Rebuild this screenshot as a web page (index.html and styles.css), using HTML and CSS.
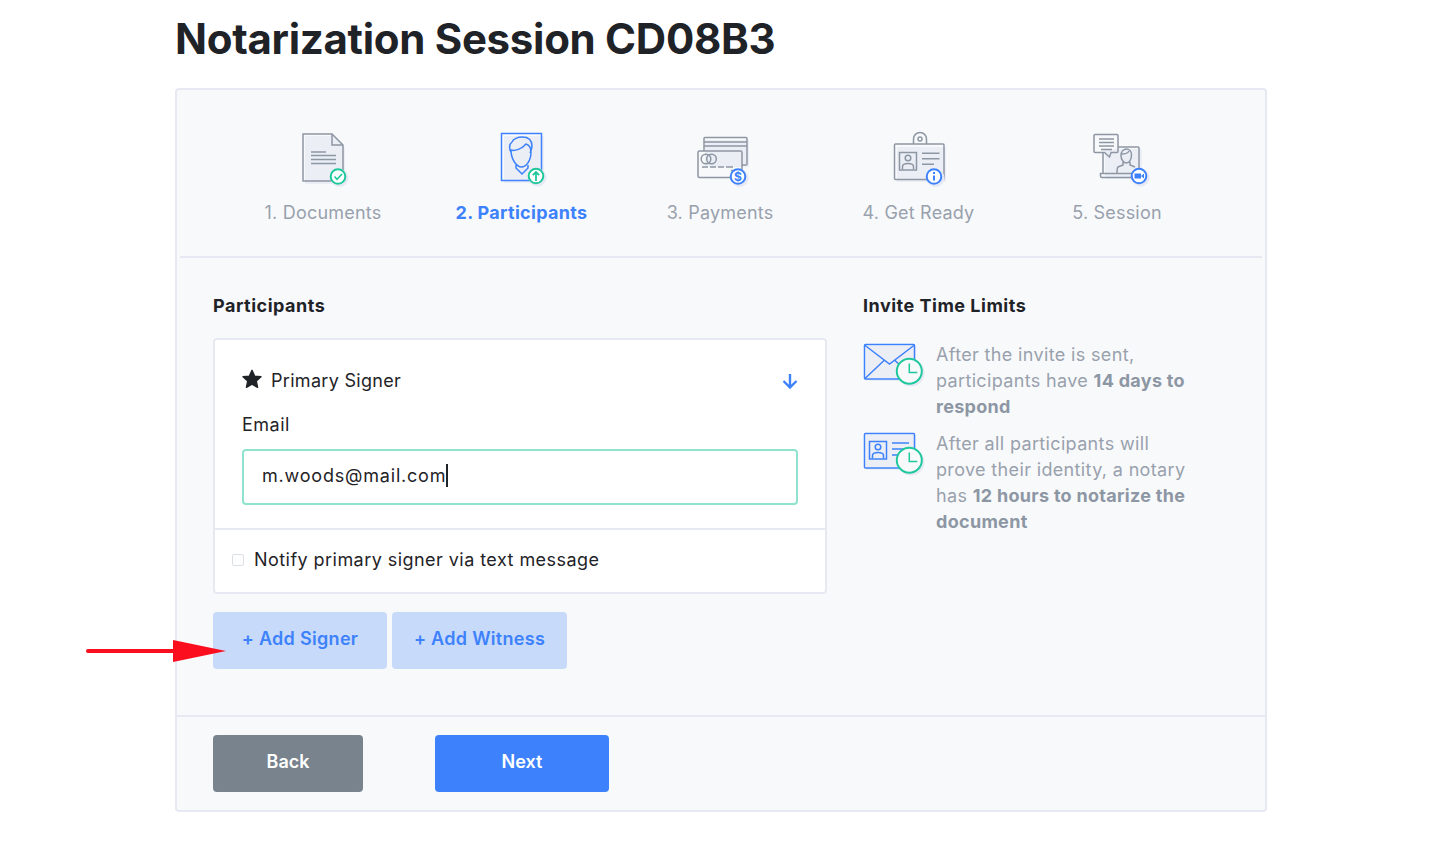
FILE: index.html
```html
<!DOCTYPE html>
<html lang="en">
<head>
  <meta charset="UTF-8">
  <meta name="viewport" content="width=device-width, initial-scale=1.0">
  <title>Notarization Session</title>
  <link rel="stylesheet" href="styles.css">
</head>
<body>
  <div class="page">
    <h1 class="title">Notarization Session CD08B3</h1>

    <div class="card">
      <div class="steps">
        <div class="step">
          <svg class="step-icon" viewBox="0 0 60 60">
            <path class="shade" d="M12 8h28l12 12v36H12z"/>
            <path class="line-gray" d="M10 6h29l11 11v36H10z" stroke-width="2"/>
            <path class="line-gray" d="M39 6v11h11M18 24h15M18 27.500h25M18 31.500h25M18 35.500h25" stroke-width="1.300"/>
            <circle class="badge-shade" cx="46.500" cy="50" r="9"/>
            <circle class="badge-white" cx="45" cy="48.500" r="7.300" stroke="#1fc79d"/>
            <path d="M41.500 48.500l2.500 2.800 5-5.300" fill="none" stroke="#1fc79d" stroke-width="1.600"/>
          </svg>
          <div class="step-label">1. Documents</div>
        </div>
        <div class="step active">
          <svg class="step-icon" viewBox="0 0 60 60">
            <path class="shade" d="M12 8h40v47H12z"/>
            <rect class="line-blue" x="9.500" y="5.500" width="40" height="47" stroke-width="2"/>
            <path class="line-blue" d="M19 24c-2-3-2-8 1-10 1-3 6-5 10-5 6 0 10 3 10 9 0 3-1 5-2 7M19 22c3 1 10 0 15-6 3 1 5 4 5 8 0 9-5 15-9.500 15S19 32 19 22zM24 37v3l6 6 6-6v-3"/>
            <circle class="badge-shade" cx="45.500" cy="49.500" r="9"/>
            <circle class="badge-white" cx="44" cy="48" r="7.300" stroke="#1fc79d"/>
            <path d="M44 53v-9M40.800 47.200L44 44l3.200 3.200" fill="none" stroke="#1fc79d" stroke-width="1.800"/>
          </svg>
          <div class="step-label">2. Participants</div>
        </div>
        <div class="step">
          <svg class="step-icon" viewBox="0 0 60 60">
            <path class="shade" d="M15 12h44v27H15z"/>
            <path class="line-gray" d="M14 23v-12.500a1 1 0 0 1 1-1h41a1 1 0 0 1 1 1v25.500a1 1 0 0 1-1 1h-4M14 14h43M14 18h43"/>
            <rect class="line-gray" x="8" y="23" width="44" height="26.500" rx="1.500" fill="#f8f9fb"/>
            <circle class="line-gray" cx="16" cy="31" r="4.800"/>
            <circle class="line-gray" cx="21.500" cy="31" r="4.800"/>
            <path class="line-gray" d="M12 39h6M20 39h6M28 39h6M36 39h7M41 42.500h5" stroke-width="1.300"/>
            <circle class="badge-shade" cx="49.500" cy="50" r="9"/>
            <circle class="badge-white" cx="48" cy="48.500" r="7.300" stroke="#3d82fc"/>
            <text class="badge-text" x="48" y="52.500">$</text>
          </svg>
          <div class="step-label">3. Payments</div>
        </div>
        <div class="step">
          <svg class="step-icon" viewBox="0 0 60 60">
            <path class="shade" d="M8 19h49v35H8z"/>
            <path class="line-gray" d="M24.500 16v-5a6.500 6.500 0 0 1 13 0v5"/>
            <circle class="line-gray" cx="31" cy="11" r="2"/>
            <rect class="line-gray" x="5.500" y="16" width="49.500" height="35.500" rx="1"/>
            <rect class="line-gray" x="10.500" y="24.500" width="17" height="17.500"/>
            <circle class="line-gray" cx="19" cy="30" r="2.800"/>
            <path class="line-gray" d="M13.500 41.500v-3c0-2 3-3 5.500-3s5.500 1 5.500 3v3M33 25.300h17.500M33 30.700h17.500M33 36.300h12"/>
            <circle class="badge-shade" cx="46.500" cy="50" r="9"/>
            <circle class="badge-white" cx="45" cy="48.500" r="7.300" stroke="#3d82fc"/>
            <path d="M45 47.500v5M45 44v2" fill="none" stroke="#3d82fc" stroke-width="2"/>
          </svg>
          <div class="step-label">4. Get Ready</div>
        </div>
        <div class="step">
          <svg class="step-icon" viewBox="0 0 60 60">
            <path class="shade" d="M18 21h37v30H18z"/>
            <path class="line-gray" d="M16 24v21M31 19h20a1 1 0 0 1 1 1v25M13.500 45.500h35v2.500a1.500 1.500 0 0 1-1.500 1.500h-32a1.500 1.500 0 0 1-1.500-1.500z"/>
            <path class="line-gray" d="M9 6.500h21a1 1 0 0 1 1 1v16a1 1 0 0 1-1 1h-6l-1.500 4.500-5-4.500h-9.500a1 1 0 0 1-1-1v-16a1 1 0 0 1 1-1z" fill="#f8f9fb"/>
            <path class="line-gray" d="M12 11h15M12 14.500h15M12 18h15M14 21.500h11" stroke-width="1.100"/>
            <path class="line-gray" d="M34 28c0-5 3-7 5.500-7s5 2 5 6c0 5-2.500 8-5 8s-5.500-3-5.500-7zM35 26c3 0 6-1 7-3M36 34v3l-5 2c-1 1-1 3-1 6M43 34v3l5 2" stroke-width="1.200"/>
            <circle class="badge-shade" cx="53.500" cy="49.500" r="9"/>
            <circle class="badge-white" cx="52" cy="48" r="7.300" stroke="#3d82fc"/>
            <path d="M47.500 45.500h6.500v5h-6.500zM54 48l3-2.500v5z" fill="#3d82fc"/>
          </svg>
          <div class="step-label">5. Session</div>
        </div>
      </div>

      <div class="body">
        <div class="col-left">
          <h2 class="heading">Participants</h2>
          <div class="signer-box">
            <div class="signer-top">
              <div class="signer-head">
                <svg class="star" viewBox="0 0 24 24"><path d="M12 2.500l2.900 6.300 6.900.8-5.100 4.700 1.400 6.800-6.100-3.400-6.100 3.400 1.400-6.800-5.100-4.700 6.900-.8z"/></svg>
                <span class="signer-name">Primary Signer</span>
                <svg class="arrow-down" viewBox="0 0 16 16"><path d="M8 1v13M1.500 8l6.500 6.500 6.500-6.500"/></svg>
              </div>
              <div class="field-label">Email</div>
              <div class="field-input"><span>m.woods@mail.com</span><span class="caret"></span></div>
            </div>
            <div class="signer-bottom">
              <span class="checkbox"></span>
              <span class="notify">Notify primary signer via text message</span>
            </div>
          </div>
          <div class="add-row">
            <button class="btn-add add-signer">+ Add Signer</button>
            <button class="btn-add add-witness">+ Add Witness</button>
          </div>
        </div>

        <div class="col-right">
          <h2 class="heading heading-right">Invite Time Limits</h2>
          <div class="limit">
            <svg class="limit-icon" viewBox="0 0 62 44">
              <path class="shade" d="M3 3h50v35H3z"/>
              <rect class="line-blue" x="1.500" y="1.500" width="50" height="34.500" rx="1"/>
              <path class="line-blue" d="M1.500 2l25 19 25-19M1.500 36l20-19M51.500 36l-20-19"/>
              <circle class="badge-shade" cx="48" cy="30" r="13.500"/>
              <circle class="clock" cx="46.300" cy="28.200" r="12.500"/>
              <path class="clock-hands" d="M46.300 20.500v9h8"/>
            </svg>
            <p class="limit-text">After the invite is sent, participants have <b>14 days to</b> <b>respond</b></p>
          </div>
          <div class="limit">
            <svg class="limit-icon" viewBox="0 0 62 44">
              <path class="shade" d="M3 3h50v35H3z"/>
              <rect class="line-blue" x="1.500" y="1.500" width="50" height="34.500" rx="1"/>
              <rect class="line-blue" x="6.500" y="9.500" width="17" height="17.500"/>
              <circle class="line-blue" cx="15" cy="15" r="2.800"/>
              <path class="line-blue" d="M9.500 26.500v-3c0-2 3-3 5.500-3s5.500 1 5.500 3v3M29 11h17M29 17h12M29 23h8"/>
              <circle class="badge-shade" cx="48" cy="30" r="13.500"/>
              <circle class="clock" cx="46.300" cy="28.200" r="12.500"/>
              <path class="clock-hands" d="M46.300 20.500v9h8"/>
            </svg>
            <p class="limit-text">After all participants will prove their identity, a notary has <b>12 hours to notarize the</b> <b>document</b></p>
          </div>
        </div>
      </div>

      <div class="footer">
        <button class="btn-back">Back</button>
        <button class="btn-next">Next</button>
      </div>
    </div>
  </div>

  <svg class="pointer" viewBox="0 0 142 24"><path d="M3 11h88" stroke="#fb0e1e" stroke-width="4" stroke-linecap="round"/><path d="M88 0l53 11-53 11z" fill="#fb0e1e"/></svg>
</body>
</html>
```

FILE: styles.css
```css
* {
  box-sizing: border-box;
}
body {
  margin: 0;
  background: #fff;
  color: #1f2327;
  font-family: Inter, "Open Sans", sans-serif;
}
.page {
  width: 1092px;
  margin-left: 175px;
}
.title {
  margin: 0;
  height: 88px;
  padding-top: 13px;
  font-size: 42px;
  line-height: 52px;
  font-weight: 700;
  letter-spacing: -0.3px;
  color: #1f2327;
}
.card {
  height: 724px;
  background: #f8f9fb;
  border: 2px solid #e6e9f1;
  border-radius: 4px;
}

/* steps */
.steps {
  display: flex;
  height: 168px;
  margin: 0 3px;
  padding: 38px 45.750px 0 43.750px;
  border-bottom: 2px solid #e6e9f1;
}
.step {
  flex: 1;
  text-align: center;
  color: #98a1ad;
}
.step-icon {
  display: block;
  width: 60px;
  height: 60px;
  margin: 0 auto;
  overflow: visible;
}
.step-label {
  margin-top: 12px;
  font-size: 18px;
  line-height: 26px;
  letter-spacing: 0.2px;
}
.step.active {
  color: #3d82fc;
}
.step.active .step-label {
  font-weight: 700;
  letter-spacing: 0.3px;
}
.shade {
  fill: #eceef6;
}
.line-gray,
.line-blue {
  fill: none;
  stroke-width: 1.500;
  stroke: #8d97a4;
}
.line-blue {
  stroke: #3d82fc;
}
.badge-shade {
  fill: #e6e9f3;
}
.badge-white {
  fill: #fff;
  stroke-width: 2;
}
.badge-text {
  font-size: 12px;
  font-weight: 700;
  fill: #3d82fc;
  text-anchor: middle;
}

/* main area */
.body {
  display: flex;
  height: 457px;
  padding: 35px 0 0 36px;
}
.col-left {
  width: 614px;
}
.col-right {
  width: 380px;
  margin-left: 36px;
}
.heading {
  margin: 0 0 19px;
  font-size: 18px;
  line-height: 26px;
  font-weight: 700;
  letter-spacing: 0.5px;
  color: #1f2327;
}
.heading-right {
  margin-bottom: 23px;
}
.signer-box {
  height: 256px;
  background: #fff;
  border: 2px solid #e6e9f1;
  border-radius: 4px;
}
.signer-top {
  height: 190px;
  padding: 27px 27px 0;
  border-bottom: 2px solid #e6e9f1;
}
.signer-head {
  display: flex;
  align-items: center;
  height: 26px;
}
.star {
  width: 22px;
  height: 22px;
  margin: -3px 0 0 -1px;
  fill: #1f2327;
  stroke: #1f2327;
  stroke-width: 1.500;
  stroke-linejoin: round;
}
.signer-name {
  margin-left: 8px;
  flex: 1;
  font-size: 18px;
  letter-spacing: 0.3px;
}
.arrow-down {
  width: 16px;
  height: 16px;
  margin-top: 2px;
  fill: none;
  stroke: #3d82fc;
  stroke-width: 2.400;
}
.field-label {
  margin-top: 19px;
  font-size: 18px;
  line-height: 26px;
  letter-spacing: 0.5px;
}
.field-input {
  display: flex;
  align-items: center;
  height: 56px;
  margin-top: 11px;
  padding: 0 0 3px 18px;
  background: #fff;
  border: 2px solid #8fe3cf;
  border-radius: 4px;
  font-size: 18px;
  letter-spacing: 0.8px;
}
.caret {
  width: 2px;
  height: 23px;
  background: #1f2327;
}
.signer-bottom {
  display: flex;
  align-items: center;
  height: 60px;
  padding: 0 0 1px 17px;
}
.checkbox {
  width: 12px;
  height: 12px;
  background: #fff;
  border: 1px solid #dcdfe4;
  border-radius: 2px;
}
.notify {
  margin-left: 10px;
  font-size: 18px;
  letter-spacing: 0.45px;
}
.add-row {
  display: flex;
  gap: 5px;
  margin-top: 18px;
}
.btn-add {
  height: 57px;
  padding: 0 0 4px;
  background: #c8daf9;
  color: #3d82fc;
  border: none;
  border-radius: 4px;
  font-family: inherit;
  font-size: 18px;
  font-weight: 600;
  letter-spacing: 0.3px;
}
.add-signer {
  width: 174px;
}
.add-witness {
  width: 175px;
}
.limit {
  display: flex;
  margin-bottom: 11px;
}
.limit-icon {
  flex: none;
  width: 62px;
  height: 44px;
  margin: 1px 11px 0 0;
  overflow: visible;
}
.limit-text {
  width: 262px;
  margin: 0;
  font-size: 18px;
  line-height: 26px;
  letter-spacing: 0.35px;
  color: #98a1ad;
}
.limit-text b {
  color: #8d97a4;
  letter-spacing: 0.3px;
}
.clock {
  fill: #f8f9fb;
  stroke: #1fc79d;
  stroke-width: 2;
}
.clock-hands {
  fill: none;
  stroke: #1fc79d;
  stroke-width: 1.500;
}

/* footer */
.footer {
  display: flex;
  height: 95px;
  padding: 18px 0 0 36px;
  border-top: 2px solid #e6e9f1;
}
.btn-back,
.btn-next {
  height: 57px;
  padding: 0 0 4px;
  color: #fff;
  border: none;
  border-radius: 4px;
  font-family: inherit;
  font-size: 18px;
  font-weight: 600;
}
.btn-back {
  width: 150px;
  background: #79838e;
}
.btn-next {
  width: 174px;
  margin-left: 72px;
  background: #3d82fc;
}

/* red annotation arrow over the page */
.pointer {
  position: absolute;
  left: 85px;
  top: 640px;
  width: 142px;
  height: 24px;
}
```
